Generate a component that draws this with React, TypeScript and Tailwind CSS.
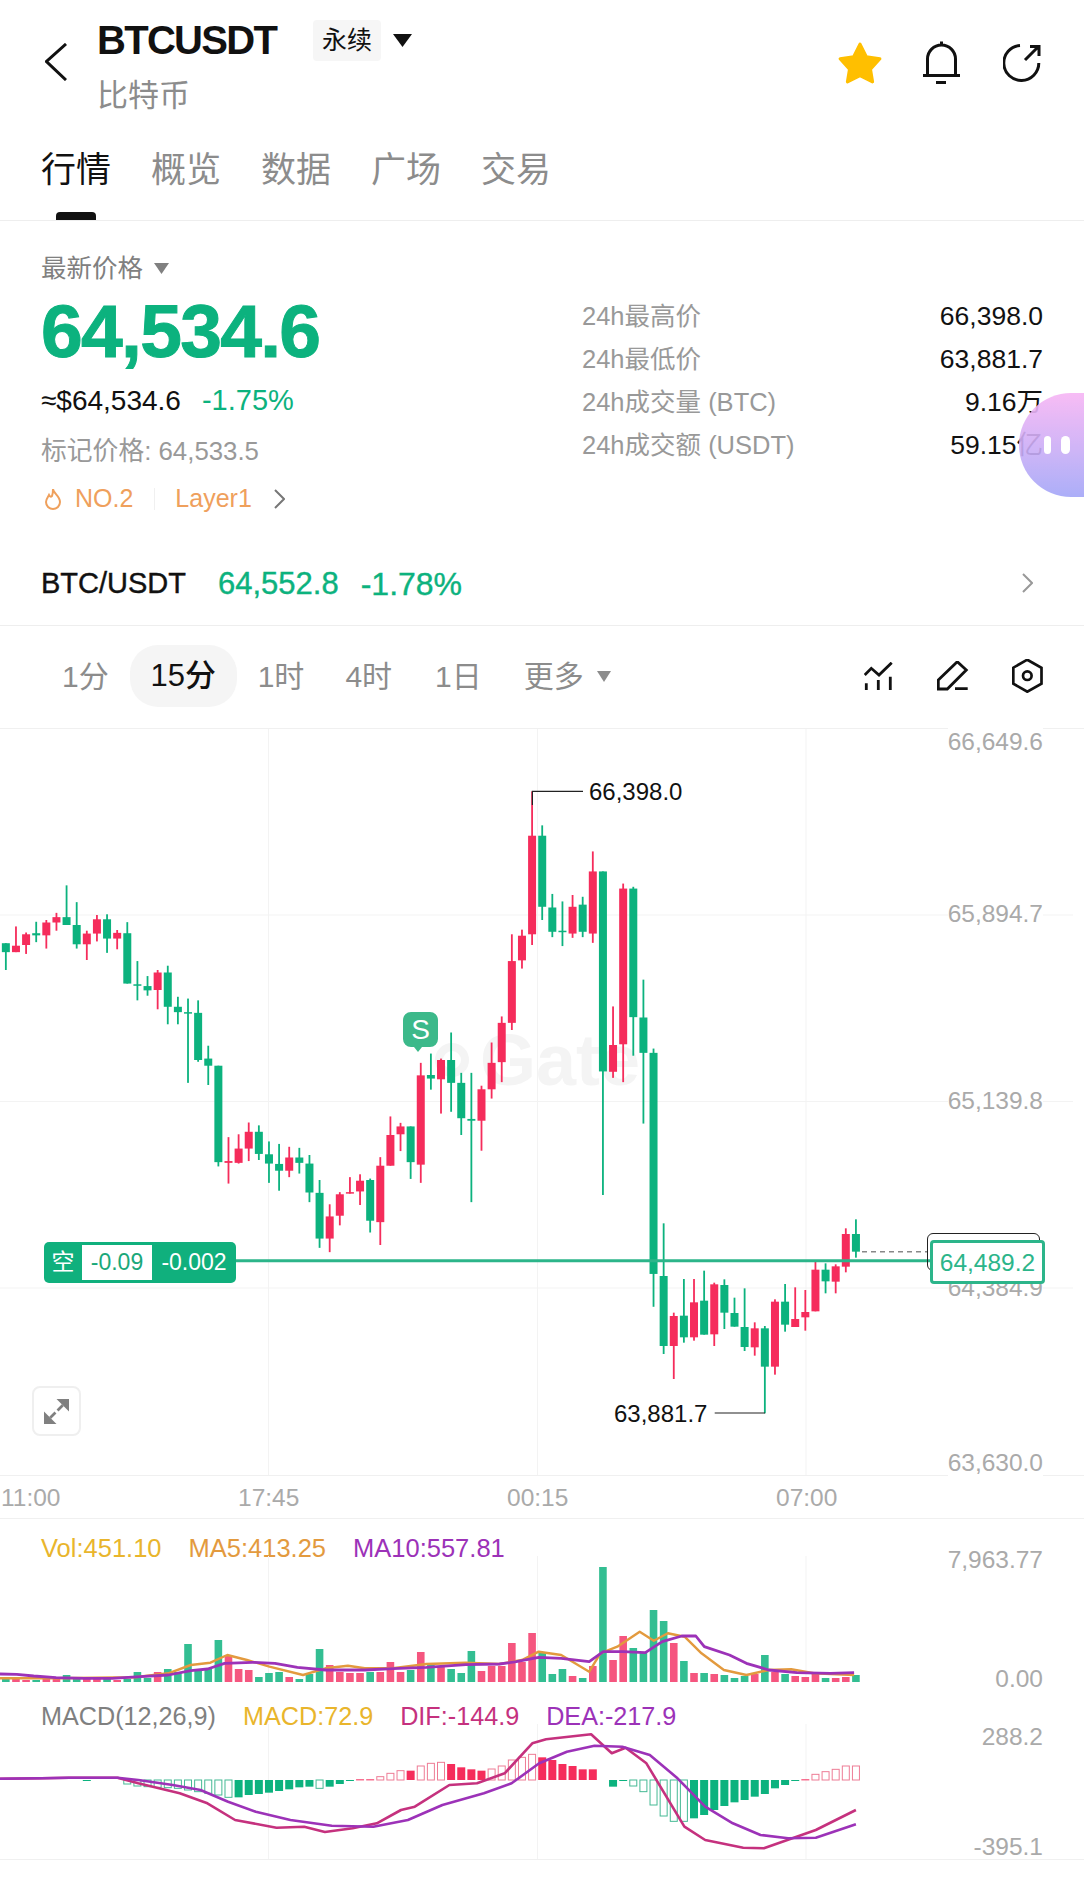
import React from 'react';

const GREEN = '#0CB27E';
const RED = '#F52C5B';

// candles: colour, wick top, body top, body bottom, wick bottom (read off the crops)
const UPPER: [string, number, number, number, number][] = [
  ['g', 625, 625, 650, 700], ['r', 578, 632, 650, 650], ['r', 595, 600, 630, 655], ['g', 565, 597, 603, 622],
  ['r', 560, 567, 603, 640], ['r', 540, 552, 567, 590], ['g', 463, 552, 574, 574], ['g', 510, 574, 628, 640],
  ['r', 590, 598, 628, 672], ['r', 546, 558, 598, 620], ['g', 544, 558, 612, 652], ['r', 588, 596, 612, 642],
  ['g', 566, 597, 738, 738], ['g', 675, 740, 743, 785], ['g', 717, 745, 757, 772], ['r', 700, 707, 756, 810],
  ['g', 688, 707, 803, 852], ['g', 775, 803, 818, 852], ['g', 780, 818, 822, 1016], ['g', 785, 820, 952, 957],
  ['g', 912, 948, 968, 1022], ['g', 968, 968, 1238, 1250], ['r', 1168, 1235, 1240, 1298], ['r', 1160, 1200, 1240, 1242],
  ['r', 1127, 1153, 1200, 1235], ['g', 1135, 1153, 1215, 1232], ['g', 1180, 1216, 1242, 1296], ['g', 1187, 1243, 1262, 1318],
  ['r', 1195, 1225, 1262, 1280], ['g', 1198, 1225, 1240, 1270], ['g', 1218, 1242, 1323, 1350], ['g', 1288, 1324, 1452, 1478],
  ['r', 1356, 1390, 1452, 1490], ['r', 1322, 1328, 1388, 1415], ['r', 1280, 1322, 1326, 1326], ['r', 1272, 1290, 1320, 1358],
  ['g', 1284, 1288, 1402, 1435], ['r', 1224, 1248, 1406, 1470], ['r', 1110, 1162, 1248, 1248], ['r', 1128, 1138, 1160, 1207],
  ['g', 1138, 1138, 1238, 1285], ['r', 960, 995, 1245, 1296], ['g', 934, 994, 1004, 1035], ['r', 948, 952, 1006, 1102],
  ['g', 875, 952, 1016, 1097], ['g', 988, 1016, 1115, 1162], ['g', 988, 1117, 1122, 1350], ['r', 1024, 1034, 1122, 1206],
  ['r', 903, 960, 1034, 1060], ['r', 830, 848, 958, 1014], ['r', 600, 675, 848, 868], ['r', 587, 604, 673, 696],
  ['r', 200, 324, 600, 630], ['g', 295, 324, 523, 560], ['g', 487, 525, 593, 608], ['g', 508, 590, 593, 633],
  ['r', 490, 523, 598, 610], ['g', 495, 517, 593, 608], ['r', 368, 424, 598, 624], ['g', 424, 424, 984, 1330],
  ['r', 802, 910, 985, 1002], ['r', 458, 472, 908, 1014], ['g', 467, 472, 832, 940], ['g', 727, 833, 932, 1130],
  ['g', 920, 932, 1551, 1643],
];
const LOWER: [string, number, number, number, number][] = [
  ['g', 70, 228, 438, 462], ['r', 338, 348, 438, 537], ['g', 237, 347, 412, 428], ['r', 237, 307, 412, 422],
  ['g', 212, 302, 404, 404], ['r', 248, 253, 403, 438], ['g', 238, 255, 338, 387], ['g', 293, 339, 380, 380],
  ['g', 265, 381, 441, 453], ['r', 367, 385, 442, 467], ['g', 378, 385, 500, 640], ['r', 298, 305, 500, 524],
  ['g', 252, 305, 374, 395], ['r', 262, 357, 381, 381], ['r', 270, 336, 352, 392], ['r', 185, 209, 334, 334],
  ['g', 190, 209, 244, 280], ['r', 193, 199, 245, 280], ['r', 85, 102, 200, 217], ['g', 58, 102, 155, 173],
];
const toUpper = (v: number) => 720 + v / 2.8;
const toLower = (v: number) => 1200 + v / 3;
const CANDLES = [
  ...UPPER.map(([c, a, b, d, e]) => ({ c, wt: toUpper(a), bt: toUpper(b), bb: toUpper(d), wb: toUpper(e) })),
  ...LOWER.map(([c, a, b, d, e]) => ({ c, wt: toLower(a), bt: toLower(b), bb: toLower(d), wb: toLower(e) })),
];
const cx = (i: number) => 5.85 + i * 10.12;

const VOL = [
  3, 3, 2, 2, 3, 3, 7, 3, 3, 3, 3, 2, 3, 10, 4, 10, 13, 10, 38, 12, 13, 42, 27, 13, 12, 5, 9, 10, 5, 3, 8, 33, 17, 10, 9, 9, 10, 10, 20, 10, 12, 30, 17,
  15, 13, 9, 31, 11, 16, 16, 39, 20, 49, 30, 8, 13, 6, 4, 16, 115, 22, 46, 34, 30, 72, 61, 39, 21, 9, 9, 8, 7, 4, 6, 8, 27, 10, 8, 6, 5, 8, 4, 4, 5, 7,
];

const MA10 = [[0, 942], [30, 943], [60, 948], [100, 953], [150, 955], [200, 955], [250, 950], [300, 945], [340, 932], [370, 927], [400, 910], [450, 907], [490, 910], [530, 922], [580, 930], [650, 930], [700, 926], [760, 922], [830, 914], [890, 912], [920, 905], [960, 892], [1000, 895], [1050, 905], [1075, 875], [1110, 875], [1150, 878], [1180, 845], [1215, 828], [1240, 828], [1255, 860], [1300, 885], [1330, 910], [1370, 930], [1420, 938], [1480, 940], [1522, 938]];
const MA5 = [[0, 955], [100, 955], [240, 952], [300, 940], [340, 915], [375, 908], [405, 885], [440, 900], [480, 920], [540, 945], [580, 925], [620, 917], [650, 925], [700, 925], [760, 912], [830, 908], [890, 912], [930, 900], [960, 875], [1000, 885], [1050, 935], [1070, 880], [1100, 860], [1140, 815], [1165, 842], [1190, 820], [1220, 830], [1250, 880], [1290, 930], [1330, 945], [1370, 930], [1410, 928], [1450, 940], [1522, 945]];
const volPts = (pts: number[][]) => pts.map(([x, y]) => `${(x / 1.782).toFixed(1)},${(1360 + y / 3).toFixed(1)}`).join(' ');

// macd bars: [index, zoomed y of the bar end, filled]
const MACD_BARS: [number, number, boolean][] = [
  [8, 302, true], [12, 312, false], [13, 318, false], [14, 320, false], [15, 322, false], [16, 323, false], [17, 325, false], [18, 330, false], [19, 335, false], [20, 340, false], [21, 345, false], [22, 352, false],
  [23, 352, true], [24, 345, true], [25, 342, true], [26, 338, true], [27, 333, true], [28, 328, true], [29, 322, true], [30, 320, true], [31, 325, false], [32, 320, true], [33, 312, true], [34, 303, true],
  [35, 298, true], [36, 298, true], [37, 290, false], [38, 280, false], [39, 272, false], [40, 272, true], [41, 258, false], [42, 250, false], [43, 247, false], [44, 252, true], [45, 262, true], [46, 268, true], [47, 272, true],
  [48, 267, false], [49, 258, false], [50, 240, false], [51, 232, false], [52, 223, false], [53, 232, true], [54, 240, true], [55, 252, true], [56, 258, true], [57, 268, true], [58, 268, true],
  [60, 320, true], [61, 303, true], [62, 318, false], [63, 335, false], [64, 375, false], [65, 408, false], [66, 424, false], [67, 424, false], [68, 415, true], [69, 405, true], [70, 390, true], [71, 378, true], [72, 367, true], [73, 360, true], [74, 350, true], [75, 342, true], [76, 325, true], [77, 315, true], [78, 303, true],
  [79, 298, true], [80, 283, false], [81, 275, false], [82, 268, false], [83, 258, false], [84, 258, false],
];
const DEA = [[0, 296], [60, 295], [100, 293], [170, 293], [200, 300], [250, 315], [290, 330], [330, 365], [370, 395], [420, 420], [480, 437], [540, 440], [590, 420], [640, 375], [700, 340], [740, 310], [780, 250], [820, 215], [860, 197], [900, 200], [940, 225], [980, 295], [1020, 380], [1060, 430], [1100, 465], [1140, 475], [1180, 473], [1238, 433]];
const DIF = [[0, 296], [60, 295], [100, 293], [170, 293], [200, 310], [260, 340], [300, 370], [340, 420], [400, 443], [440, 440], [470, 456], [510, 445], [545, 430], [580, 390], [600, 380], [650, 315], [690, 310], [730, 280], [770, 190], [790, 178], [855, 163], [885, 220], [905, 203], [935, 250], [990, 440], [1020, 480], [1075, 503], [1105, 505], [1180, 450], [1238, 390]];
const macdPts = (pts: number[][]) => pts.map(([x, y]) => `${(x / 1.4465).toFixed(1)},${(1680 + y / 3).toFixed(1)}`).join(' ');

const GRID_X = [268.5, 537.5, 806];

const Caret = ({ className, color }: { className: string; color: string }) => (
  <svg viewBox="0 0 14 11" preserveAspectRatio="none" className={className}><path d="M0 0H14L7 11Z" fill={color} /></svg>
);

const STATS = [
  ['24h最高价', '66,398.0'],
  ['24h最低价', '63,881.7'],
  ['24h成交量 (BTC)', '9.16万'],
  ['24h成交额 (USDT)', '59.15亿'],
];

const TAB_CLASS = 'text-[35px] leading-[35px] mt-[22px]';

export default function App() {
  return (
    <div className="relative w-[1084px] h-[1878px] overflow-hidden bg-white font-['Liberation_Sans','Noto_Sans_CJK_SC',sans-serif] text-[#111]">
      {/* top bar */}
      <header className="flex h-[130px] pl-[45px] pr-[43px]">
        <svg width="22" height="38" viewBox="0 0 22 38" className="mt-[43px]" fill="none" stroke="#111" strokeWidth="3">
          <path d="M21 1L1.5 18.5L21 37" />
        </svg>
        <div className="ml-[30px] pt-[19px]">
          <div className="flex items-center h-[42px]">
            <span className="w-[180px] text-[40px] leading-[42px] font-bold tracking-[-1.7px] whitespace-nowrap">BTCUSDT</span>
            <span className="ml-[36px] flex h-[41px] w-[68px] items-center justify-center rounded-[4px] bg-[#f6f6f6] pt-[2px] text-[25px]">永续</span>
            <Caret className="ml-[12px] w-[19px] h-[13px]" color="#111" />
          </div>
          <div className="mt-[19px] text-[31px] leading-[31px] text-[#8c8c8c]">比特币</div>
        </div>
        <div className="ml-auto mt-[41px] flex items-start h-[44px]">
          <svg width="46" height="44" viewBox="0 0 44 42">
            <path d="M22 3L28 15L41 17L32 27L34 39L22 33L10 39L12 27L3 17L16 15Z" fill="#FFBF00" stroke="#FFBF00" strokeWidth="3" strokeLinejoin="round" />
          </svg>
          <svg width="37" height="43" viewBox="0 0 37 43" className="ml-[40px]" fill="none" stroke="#111" strokeWidth="3">
            <path d="M4.5 34V18a14 14 0 0 1 28 0V34M18.5 0.5V4M0 34.5H37M13 41.5H23" />
          </svg>
          <svg width="38" height="38" viewBox="0 0 38 38" className="ml-[43px] mt-[3px]" fill="none" stroke="#111" strokeWidth="3">
            <path d="M17 1.5A17.5 17.5 0 1 0 35.8 19M22 16L36 2M27 2.5H36V12" />
          </svg>
        </div>
      </header>

      <nav className="flex h-[91px] gap-[40px] border-b border-[#eeeeee] pl-[41px]">
        <div className="relative w-[70px]">
          <div className={TAB_CLASS}>行情</div>
          <div className="absolute bottom-0 left-[15px] h-[8px] w-[40px] rounded-t-[4px] bg-[#111]" />
        </div>
        {['概览', '数据', '广场', '交易'].map((t) => (
          <div key={t} className={`w-[70px] text-[#8c8c8c] ${TAB_CLASS}`}>{t}</div>
        ))}
      </nav>

      {/* price summary */}
      <section className="flex h-[320px] pl-[41px] pr-[41px]">
        <div className="w-[541px]">
          <div className="mt-[32px] flex h-[30px] items-center text-[25.5px] text-[#808080]">
            最新价格
            <Caret className="ml-[11px] w-[15px] h-[11px]" color="#808080" />
          </div>
          <div className="mt-[18px] h-[60px] text-[75px] leading-[60px] font-bold tracking-[-1.7px] [-webkit-text-stroke:1px_#0CB27E]" style={{ color: GREEN }}>64,534.6</div>
          <div className="mt-[25px] flex h-[30px] items-center text-[28px]">
            <span>≈$64,534.6</span>
            <span className="ml-[21px] text-[29px]" style={{ color: GREEN }}>-1.75%</span>
          </div>
          <div className="mt-[20px] flex h-[30px] items-center text-[25.8px] text-[#999]">标记价格: 64,533.5</div>
          <div className="mt-[18px] flex h-[30px] items-center text-[25px] text-[#EFA05C]">
            <svg width="18" height="22" viewBox="0 0 18 22" className="ml-[3px]" fill="none" stroke="#EFA05C" strokeWidth="2">
              <path d="M9 1C9 5 16 8 16 14a7 7 0 0 1-14 0C2 11 4 9 5 7C6 9 7 9 8 8C9 6 9 3 9 1Z" />
            </svg>
            <span className="ml-[13px]">NO.2</span>
            <span className="ml-[21px] h-[22px] w-px bg-[#f0f0f0]" />
            <span className="ml-[20px]">Layer1</span>
            <svg width="11" height="20" viewBox="0 0 11 20" className="ml-[22px]" fill="none" stroke="#777" strokeWidth="2">
              <path d="M1 1L10 10L1 19" />
            </svg>
          </div>
        </div>
        <div className="flex-1 pt-[74px] text-[25.5px]">
          {STATS.map(([label, value]) => (
            <div key={label} className="flex h-[43px] items-center justify-between">
              <span className="text-[#999]">{label}</span>
              <span className="text-[26.5px]">{value}</span>
            </div>
          ))}
        </div>
      </section>

      <section className="flex h-[85px] items-center border-b border-[#eeeeee] pl-[41px] pr-[51px] pb-[1px]">
        <span className="mt-[3px] text-[29px] [-webkit-text-stroke:0.4px_#111]">BTC/USDT</span>
        <span className="ml-[32px] mt-[3px] text-[31px] [-webkit-text-stroke:0.4px_#0CB27E]" style={{ color: GREEN }}>64,552.8</span>
        <span className="ml-[22px] mt-[3px] text-[32px] [-webkit-text-stroke:0.4px_#0CB27E]" style={{ color: GREEN }}>-1.78%</span>
        <svg width="11" height="20" viewBox="0 0 11 20" className="ml-auto" fill="none" stroke="#999" strokeWidth="2">
          <path d="M1 1L10 10L1 19" />
        </svg>
      </section>

      {/* interval row */}
      <section className="flex h-[102px] items-center pl-[62px] pr-[41px] pb-[2px] text-[30px] text-[#8c8c8c]">
        <span>1分</span>
        <span className="ml-[21px] flex h-[62px] w-[107px] items-center justify-center rounded-[28px] bg-[#f5f5f5] text-[31px] font-medium text-[#111]">15分</span>
        <span className="ml-[21px]">1时</span>
        <span className="ml-[41px]">4时</span>
        <span className="ml-[43px]">1日</span>
        <span className="ml-[42px]">更多</span>
        <Caret className="ml-[13px] w-[14px] h-[11px]" color="#8c8c8c" />
        <svg width="29" height="29" viewBox="0 0 29 29" className="ml-auto" fill="none" stroke="#111" strokeWidth="2.8">
          <path d="M0.7 13L7.3 6.3L15 13L27.7 0.7M2.3 21.3V28M14.3 18V28M26.3 14.7V28" />
        </svg>
        <svg width="32" height="30" viewBox="0 0 32 30" className="ml-[44px]" fill="none" stroke="#111" strokeWidth="2.8">
          <path d="M1.3 19L20.3 0.7L29.3 9L10.3 28H1.3ZM18 27.7H30.7" />
        </svg>
        <svg width="31" height="34" viewBox="0 0 31 34" className="ml-[43px]" fill="none" stroke="#111" strokeWidth="2.7">
          <path d="M15.3 0.7L29.5 8.7V24.7L15.3 32.7L1.3 24.7V8.7Z" />
          <circle cx="15.3" cy="16.7" r="4.3" />
        </svg>
      </section>

      {/* candles */}
      <section className="relative h-[747px] border-t border-[#f0f0f0]">
        <div className="absolute left-[480px] top-[301px] text-[72px] leading-[60px] font-bold text-[#f4f4f4]">Gate</div>
        <svg width="1084" height="746" viewBox="0 729 1084 746" className="absolute left-0 top-0" fill="none">
          {GRID_X.map((x) => <path key={x} d={`M${x} 729V1475`} stroke="#f3f3f3" />)}
          {[915, 1101.5, 1288].map((y) => <path key={y} d={`M0 ${y}H1073`} stroke="#f3f3f3" />)}
          <circle cx="452" cy="1060" r="13" stroke="#f4f4f4" strokeWidth="8" />
          {CANDLES.map((k, i) => (
            <g key={i} fill={k.c === 'g' ? GREEN : RED} stroke="none">
              <rect x={cx(i) - 0.9} y={k.wt} width="1.8" height={k.wb - k.wt} />
              <rect x={cx(i) - 4} y={k.bt} width="8" height={Math.max(k.bb - k.bt, 1.5)} />
            </g>
          ))}
          <path d="M532.4 805V791.4H583" stroke="#222" strokeWidth="1.2" />
          <path d="M714.7 1413H765" stroke="#222" strokeWidth="1.2" />
          <path d="M236 1260.7H932" stroke="#2CB58A" strokeWidth="3" />
          <path d="M862 1251.7H927" stroke="#888" strokeWidth="1.5" strokeDasharray="5 4" />
          <path d="M403 1020a8 8 0 0 1 8-8h19a8 8 0 0 1 8 8v19a8 8 0 0 1-8 8h-8l-4 5l-4-5h-3a8 8 0 0 1-8-8Z" fill="#3CB98A" />
        </svg>
        <div className="absolute left-[403px] top-[283px] flex h-[35px] w-[35px] items-center justify-center text-[28px] text-white">S</div>

        {[['66,649.6', 13], ['65,894.7', 185], ['65,139.8', 372], ['64,384.9', 559], ['63,630.0', 734]].map(([label, top]) => (
          <div key={label} className="absolute right-[41px] bg-white text-[24.5px] leading-[28px] text-[#aaa]" style={{ top: (top as number) - 14 }}>{label}</div>
        ))}
        <div className="absolute left-[589px] top-[49px] text-[24px] leading-[28px] text-[#111]">66,398.0</div>
        <div className="absolute left-[614px] top-[671px] text-[24px] leading-[28px] text-[#111]">63,881.7</div>

        <div className="absolute left-[44px] top-[513px] flex h-[41px] w-[192px] items-center rounded-[5px] bg-[#10B07D] py-[3px] text-[23px] text-white">
          <span className="w-[38px] text-center">空</span>
          <span className="flex h-full w-[70px] items-center justify-center bg-white text-[#1aa87a]">-0.09</span>
          <span className="flex-1 text-center">-0.002</span>
        </div>
        <div className="absolute left-[927px] top-[504px] h-[38px] w-[113px] rounded-[6px] border border-[#222]" />
        <div className="absolute left-[930px] top-[511px] flex h-[44px] w-[115px] items-center justify-center rounded-[4px] border-[3px] border-[#2CB58A] bg-white pt-[2px] text-[24.5px] text-[#2CB58A]">64,489.2</div>

        <div className="absolute left-[32px] top-[657px] flex h-[50px] w-[49px] items-center justify-center rounded-[8px] border-2 border-[#efefef] bg-white">
          <svg width="25" height="25" viewBox="0 0 24 24" fill="#808080" stroke="#808080" strokeWidth="2.6">
            <path d="M24 0H12L24 12Z" strokeWidth="0" />
            <path d="M0 24H12L0 12Z" strokeWidth="0" />
            <path d="M18 6L13 11M6 18L11 13" fill="none" />
          </svg>
        </div>
      </section>

      {/* time axis */}
      <section className="flex h-[44px] items-center border-y border-[#f0f0f0] pl-[1px] pt-[3px] text-[24.5px] text-[#aaa]">
        {['11:00', '17:45', '00:15', '07:00'].map((t, i) => (
          <span key={t} className={i === 0 ? 'w-[237px]' : 'w-[269px]'}>{t}</span>
        ))}
      </section>

      {/* volume */}
      <section className="relative h-[176px]">
        <div className="absolute left-[41px] top-[15px] flex gap-[27px] text-[25.5px] leading-[28px]">
          <span className="text-[#E9B52C]">Vol:451.10</span>
          <span className="text-[#E39A3E]">MA5:413.25</span>
          <span className="text-[#9C32B8]">MA10:557.81</span>
        </div>
        <svg width="1084" height="176" viewBox="0 1519 1084 176" className="absolute left-0 top-0" fill="none">
          {GRID_X.map((x) => <path key={x} d={`M${x} 1556V1682`} stroke="#f3f3f3" />)}
          {VOL.map((h, i) => (
            <rect key={i} x={cx(i) - 3.8} y={1682 - h} width="7.6" height={h} fill={CANDLES[i].c === 'g' ? '#33BE92' : '#F5567F'} />
          ))}
          <polyline points={volPts(MA5)} stroke="#E39A3E" strokeWidth="2.4" strokeLinejoin="round" />
          <polyline points={volPts(MA10)} stroke="#9C32B8" strokeWidth="2.8" strokeLinejoin="round" />
        </svg>
        <div className="absolute right-[41px] top-[27px] text-[24.5px] leading-[28px] text-[#aaa]">7,963.77</div>
        <div className="absolute right-[41px] top-[146px] text-[24.5px] leading-[28px] text-[#aaa]">0.00</div>
      </section>

      {/* macd */}
      <section className="relative h-[165px] border-b border-[#f0f0f0]">
        <div className="absolute left-[41px] top-[7px] flex gap-[27px] text-[25.2px] leading-[28px]">
          <span className="text-[#808080]">MACD(12,26,9)</span>
          <span className="text-[#E9B52C]">MACD:72.9</span>
          <span className="text-[#C5317E]">DIF:-144.9</span>
          <span className="text-[#9C32B8]">DEA:-217.9</span>
        </div>
        <svg width="1084" height="164" viewBox="0 1695 1084 164" className="absolute left-0 top-0" fill="none">
          {GRID_X.map((x) => <path key={x} d={`M${x} 1724V1859`} stroke="#f3f3f3" />)}
          {MACD_BARS.map(([i, end, filled]) => {
            const y = 1680 + end / 3;
            const top = Math.min(y, 1780);
            const h = Math.max(Math.abs(y - 1780), 1);
            const isGreen = i < 35 || (i >= 60 && i < 79);
            return filled ? (
              <rect key={i} x={cx(i) - 4} y={top} width="8" height={h} fill={isGreen ? GREEN : RED} />
            ) : (
              <rect key={i} x={cx(i) - 3.5} y={top} width="7" height={h} stroke={isGreen ? '#45B994' : '#EE7C95'} />
            );
          })}
          <polyline points={macdPts(DIF)} stroke="#C5317E" strokeWidth="2.6" strokeLinejoin="round" />
          <polyline points={macdPts(DEA)} stroke="#9C32B8" strokeWidth="2.6" strokeLinejoin="round" />
        </svg>
        <div className="absolute right-[41px] top-[28px] text-[24.5px] leading-[28px] text-[#aaa]">288.2</div>
        <div className="absolute right-[41px] top-[138px] text-[24.5px] leading-[28px] text-[#aaa]">-395.1</div>
      </section>

      {/* floating ball */}
      <div className="absolute left-[1019px] top-[393px] flex h-[104px] w-[65px] items-center gap-[10px] rounded-l-[52px] bg-gradient-to-b from-[#F7B5F5] to-[#A3A6F8] pl-[25px] opacity-90">
        <span className="h-[18px] w-[7px] rounded-full bg-white" />
        <span className="h-[18px] w-[9px] rounded-full bg-white" />
      </div>
    </div>
  );
}
